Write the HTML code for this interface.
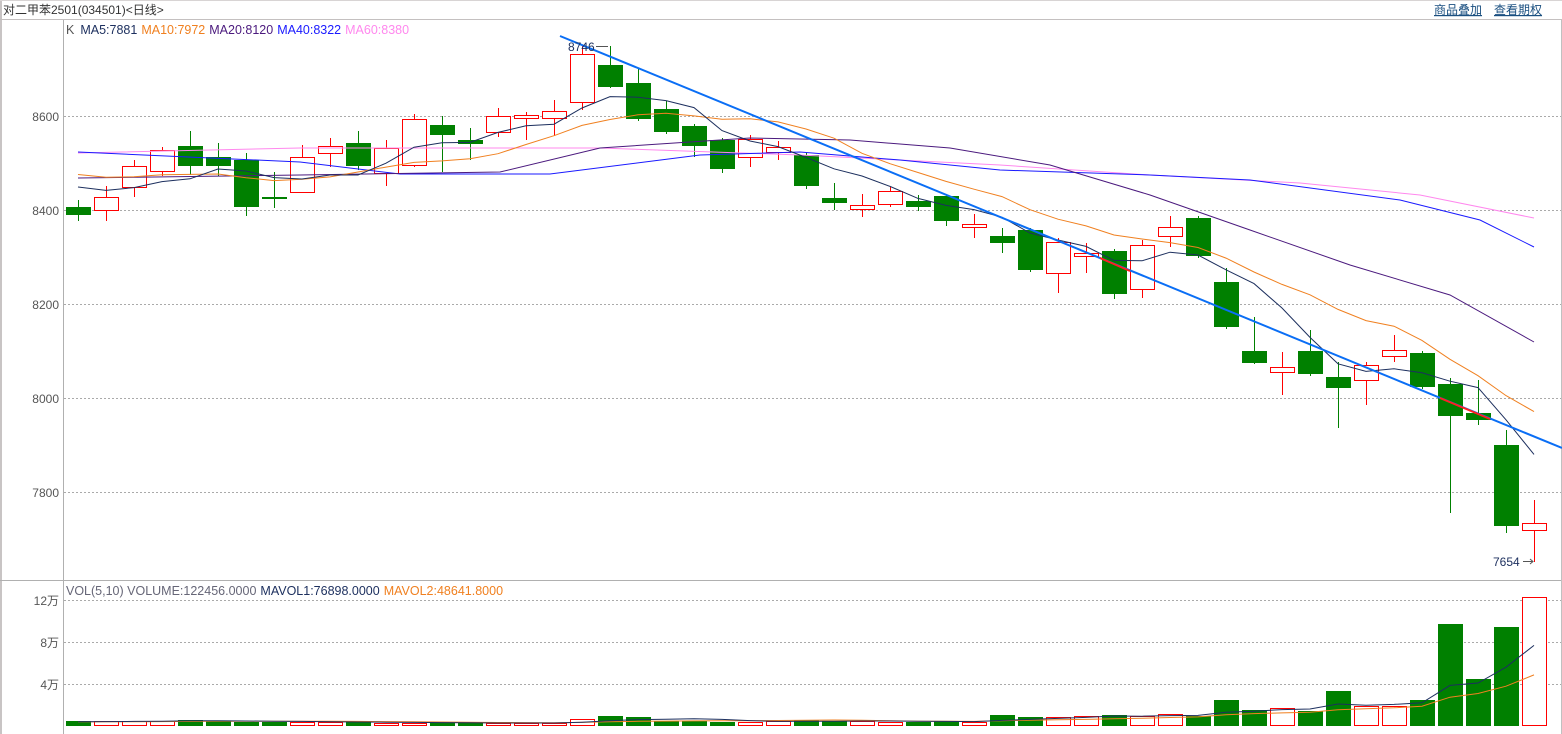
<!DOCTYPE html>
<html><head><meta charset="utf-8"><style>
html,body{margin:0;padding:0;background:#fff;width:1562px;height:734px;overflow:hidden;font-family:"Liberation Sans","Noto Sans CJK SC",sans-serif}
svg{display:block}
</style></head><body>
<svg id="c" width="1562" height="734" xmlns="http://www.w3.org/2000/svg" font-family="Liberation Sans, Noto Sans CJK SC, sans-serif">
<rect x="0" y="0" width="1562" height="734" fill="#fff"/>
<rect x="0" y="0" width="2" height="734" fill="#c8c4c4"/>
<line x1="0" y1="19.5" x2="1562" y2="19.5" stroke="#c4c0c0"/>
<line x1="0" y1="0.5" x2="1562" y2="0.5" stroke="#d8d4d4"/>
<line x1="63.5" y1="20" x2="63.5" y2="734" stroke="#b0b0b0"/>
<line x1="0" y1="580.5" x2="1562" y2="580.5" stroke="#b0b0b0"/>
<line x1="1561.5" y1="20" x2="1561.5" y2="734" stroke="#c0c0c0"/>
<text x="3" y="14" font-size="12" fill="#333">对二甲苯2501(034501)&lt;日线&gt;</text>
<text x="1434" y="14" font-size="12" fill="#1a4f80" text-decoration="underline">商品叠加</text>
<text x="1494" y="14" font-size="12" fill="#1a4f80" text-decoration="underline">查看期权</text>
<text x="66" y="34" font-size="12.5"><tspan fill="#555">K</tspan><tspan fill="#1c2f5e" dx="6">MA5:7881</tspan><tspan fill="#f08020" dx="4">MA10:7972</tspan><tspan fill="#4b1a7e" dx="4">MA20:8120</tspan><tspan fill="#1a1aff" dx="4">MA40:8322</tspan><tspan fill="#ff88ee" dx="4">MA60:8380</tspan></text>
<text x="66" y="595" font-size="12.5"><tspan fill="#667">VOL(5,10) VOLUME:122456.0000</tspan><tspan fill="#1c2f5e" dx="4">MAVOL1:76898.0000</tspan><tspan fill="#f08020" dx="4">MAVOL2:48641.8000</tspan></text>
<g font-size="12" fill="#555" text-anchor="end">
<text x="59" y="121">8600</text><text x="59" y="215">8400</text><text x="59" y="309">8200</text><text x="59" y="403">8000</text><text x="59" y="497">7800</text>
<text x="59" y="605">12万</text><text x="59" y="647">8万</text><text x="59" y="689">4万</text>
</g>
<g stroke="#aaa" stroke-dasharray="2,2">
<line x1="64" y1="116.5" x2="1561" y2="116.5"/><line x1="64" y1="210.5" x2="1561" y2="210.5"/><line x1="64" y1="304.5" x2="1561" y2="304.5"/><line x1="64" y1="398.5" x2="1561" y2="398.5"/><line x1="64" y1="492.5" x2="1561" y2="492.5"/>
<line x1="64" y1="600.5" x2="1561" y2="600.5"/><line x1="64" y1="642.5" x2="1561" y2="642.5"/><line x1="64" y1="684.5" x2="1561" y2="684.5"/>
</g>
<g id="cd"></g>
<polyline fill="none" stroke="#ff88ee" stroke-width="1" points="78,153 300,148 600,148 800,155 1000,165 1150,175 1300,183 1420,195 1534,218"/>
<polyline fill="none" stroke="#1a1aff" stroke-width="1" points="78,152 300,162 400,174 550,174 700,155 800,152 900,160 1000,170 1150,175 1250,180 1400,200 1480,220 1534,247"/>
<polyline fill="none" stroke="#4b1a7e" stroke-width="1" points="78,178 300,175 500,172 600,148 750,138 850,140 950,148 1050,165 1150,195 1250,230 1350,265 1450,295 1534,342"/>
<g id="ma"></g>
<line x1="560" y1="36" x2="1562" y2="448" stroke="#0a6ef5" stroke-width="2"/>
<line x1="1100" y1="258" x2="1130" y2="271" stroke="#ff2020" stroke-width="2"/>
<line x1="1440" y1="398" x2="1490" y2="419" stroke="#ff2020" stroke-width="2"/>
<text x="568" y="51" font-size="12" fill="#1c2f5e">8746</text>
<line x1="596" y1="46.5" x2="608" y2="46.5" stroke="#555"/>
<text x="1493" y="566" font-size="12" fill="#1c2f5e">7654</text>
<line x1="1523" y1="561.5" x2="1533" y2="561.5" stroke="#555"/><path d="M1530,559 L1533,561.5 L1530,564" fill="none" stroke="#555"/>
</svg>
<script>
var C=[[0,207,215,200,221],[1,197,210,186,221],[1,166,187,160,197],[1,150,171,147,176],[0,146,166,131,175],[0,157,166,143,176],[0,160,207,153,216],[0,197,199,172,208],[1,157,192,145,193],[1,146,153,138,167],[0,143,166,131,170],[1,148,173,140,186],[1,119,165,114,167],[0,125,135,116,172],[0,140,144,128,160],[1,116,132,108,137],[1,115,118,112,140],[1,111,118,100,136],[1,54,102,45,110],[0,65,87,46,88],[0,83,119,68,121],[0,109,132,101,134],[0,126,146,124,157],[0,140,169,138,173],[1,139,157,135,167],[1,147,152,141,160],[0,155,186,153,189],[0,198,203,183,210],[1,205,209,194,217],[1,191,204,187,207],[0,201,207,195,211],[0,196,221,194,226],[1,224,227,214,238],[0,236,243,228,253],[0,230,270,228,272],[1,242,273,238,293],[1,253,256,243,273],[0,251,294,249,299],[1,245,289,240,298],[1,227,236,216,247],[0,218,256,216,258],[0,282,327,268,329],[0,351,363,317,364],[1,367,372,352,395],[0,351,374,330,376],[0,377,388,362,428],[1,365,380,362,405],[1,350,356,335,362],[0,353,387,351,389],[0,384,416,378,513],[0,413,420,380,425],[0,445,526,430,533],[1,523,530,500,562]];
var V=[721,721,721,721,720,721,722,722,722,722,722,723,723,723,723,723,723,723,719,716,717,721,721,722,722,721,720,721,721,722,722,721,722,715,717,717,716,715,716,714,716,700,710,708,711,691,706,706,700,624,679,627,597];
var s='',cl=[],vs=[];
C.forEach(function(c,i){var x=78+28*i,col=c[0]?'#ff0000':'#008000';
var cls=c[0]?c[1]:c[2];cl.push(cls);
s+='<line x1="'+(x+.5)+'" y1="'+c[3]+'" x2="'+(x+.5)+'" y2="'+c[1]+'" stroke="'+col+'"/>';
s+='<line x1="'+(x+.5)+'" y1="'+c[2]+'" x2="'+(x+.5)+'" y2="'+c[4]+'" stroke="'+col+'"/>';
if(c[0])s+='<rect x="'+(x-11.5)+'" y="'+(c[1]+.5)+'" width="24" height="'+Math.max(c[2]-c[1],1)+'" fill="#fff" stroke="#ff0000"/>';
else s+='<rect x="'+(x-12)+'" y="'+c[1]+'" width="25" height="'+Math.max(c[2]-c[1],2)+'" fill="#008000"/>';
var v=V[i];vs.push(v);
if(c[0])s+='<rect x="'+(x-11.5)+'" y="'+(v+.5)+'" width="24" height="'+(725-v)+'" fill="#fff" stroke="#ff0000"/>';
else s+='<rect x="'+(x-12)+'" y="'+v+'" width="25" height="'+(726-v)+'" fill="#008000"/>';
});
document.getElementById('cd').innerHTML=s;
function ma(a,n,pad){var p=[];for(var i=0;i<a.length;i++){var t=0;for(var k=0;k<n;k++){var j=i-k;t+=j>=0?a[j]:pad;}p.push((78+28*i)+','+(t/n).toFixed(1));}return p.join(' ');}
var m='<polyline fill="none" stroke="#f08020" points="'+ma(cl,10,170)+'"/>';
m+='<polyline fill="none" stroke="#1c2f5e" points="'+ma(cl,5,180)+'"/>';
m+='<polyline fill="none" stroke="#f08020" points="'+ma(vs,10,722)+'"/>';
m+='<polyline fill="none" stroke="#1c2f5e" points="'+ma(vs,5,722)+'"/>';
document.getElementById('ma').innerHTML=m;
</script>
</body></html>
